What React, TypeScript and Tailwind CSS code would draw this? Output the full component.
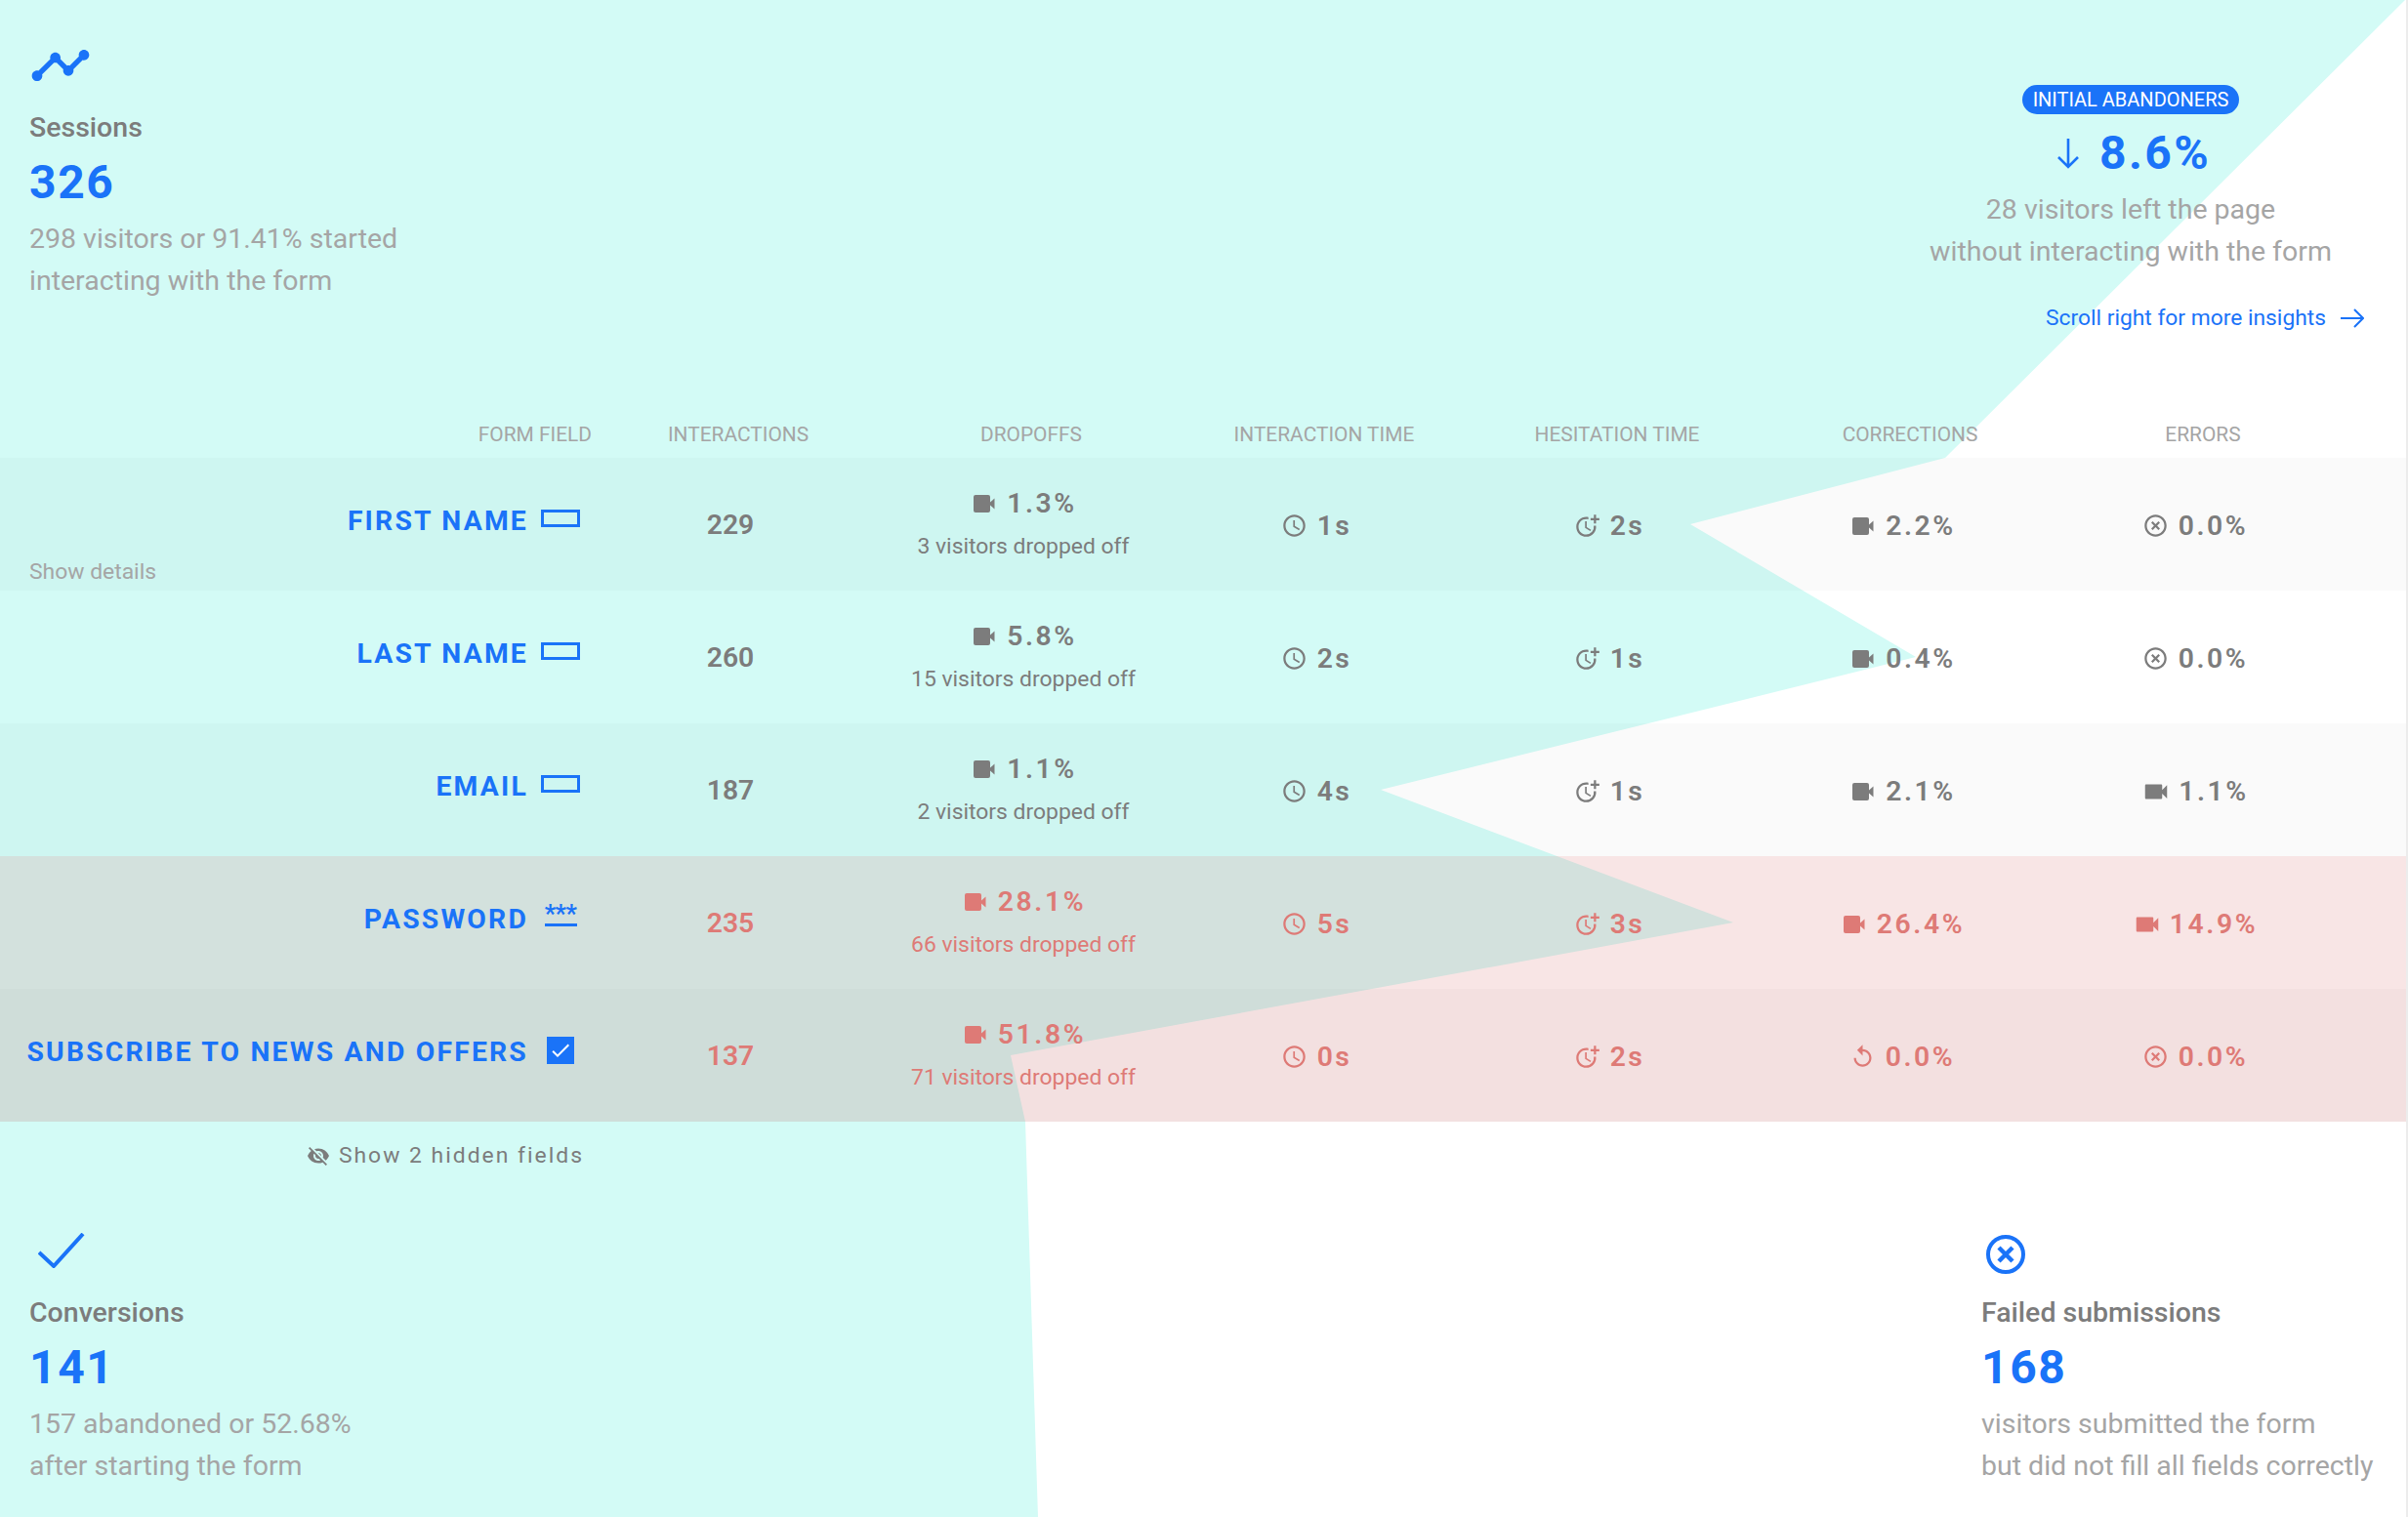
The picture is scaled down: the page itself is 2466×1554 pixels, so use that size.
import React from "react";
import {
  MdAccessTime,
  MdHighlightOff,
  MdCheck,
  MdMoreTime,
  MdReplay,
  MdTimeline,
  MdVideocam,
  MdVisibilityOff,
} from "react-icons/md";

type Tone = "grey" | "red";

type Metric = { icon: "cam" | "off" | "redo" | "camSmall"; value: string };

interface Field {
  name: string;
  kind: "text" | "password" | "check";
  interactions: string;
  drop: string;
  dropText: string;
  time: string;
  hesitation: string;
  corrections: Metric;
  errors: Metric;
  tone: Tone;
  striped: boolean;
}

const fields: Field[] = [
  { name: "FIRST NAME", kind: "text", interactions: "229", drop: "1.3%", dropText: "3 visitors dropped off", time: "1s", hesitation: "2s", corrections: { icon: "cam", value: "2.2%" }, errors: { icon: "off", value: "0.0%" }, tone: "grey", striped: true },
  { name: "LAST NAME", kind: "text", interactions: "260", drop: "5.8%", dropText: "15 visitors dropped off", time: "2s", hesitation: "1s", corrections: { icon: "cam", value: "0.4%" }, errors: { icon: "off", value: "0.0%" }, tone: "grey", striped: false },
  { name: "EMAIL", kind: "text", interactions: "187", drop: "1.1%", dropText: "2 visitors dropped off", time: "4s", hesitation: "1s", corrections: { icon: "cam", value: "2.1%" }, errors: { icon: "camSmall", value: "1.1%" }, tone: "grey", striped: true },
  { name: "PASSWORD", kind: "password", interactions: "235", drop: "28.1%", dropText: "66 visitors dropped off", time: "5s", hesitation: "3s", corrections: { icon: "cam", value: "26.4%" }, errors: { icon: "camSmall", value: "14.9%" }, tone: "red", striped: false },
  { name: "SUBSCRIBE TO NEWS AND OFFERS", kind: "check", interactions: "137", drop: "51.8%", dropText: "71 visitors dropped off", time: "0s", hesitation: "2s", corrections: { icon: "redo", value: "0.0%" }, errors: { icon: "off", value: "0.0%" }, tone: "red", striped: true },
];

const columns = ["INTERACTIONS", "DROPOFFS", "INTERACTION TIME", "HESITATION TIME", "CORRECTIONS", "ERRORS"];

function Funnel() {
  return (
    <svg className="absolute left-0 top-0" width="2466" height="1554" viewBox="0 0 2466 1554">
      <polygon
        fill="#d3fbf6"
        points="0,0 2463,0 1992,469 1731,537 1962,673 1414,809 1775,945 1035,1081 1050,1149 1063,1554 0,1554"
      />
    </svg>
  );
}

function FieldIcon({ kind }: { kind: Field["kind"] }) {
  if (kind === "text") {
    return <div className="w-[40px] h-[18px] border-[3px] border-[#1a73f8] mb-[6px]" />;
  }
  if (kind === "password") {
    return (
      <div className="w-[40px] mb-[6px] flex flex-col items-center text-[#1a73f8]">
        <span className="text-[25px] leading-[13px] font-bold tracking-[-0.5px]">***</span>
        <div className="w-[33px] h-[3px] bg-[#1a73f8] mt-[3px]" />
      </div>
    );
  }
  return (
    <div className="w-[28px] h-[28px] mx-[6px] mb-[6px] bg-[#1a73f8] flex items-center justify-center">
      <MdCheck className="text-white w-[24px] h-[24px]" />
    </div>
  );
}

function CamIcon() {
  return (
    <svg width="26" height="18" viewBox="-4 0 26 18" fill="currentColor">
      <rect x="0" y="0" width="17" height="18" rx="2" />
      <path d="M17 7.5L21.5 3.5v11L17 10.5z" />
    </svg>
  );
}

function MetricValue({ icon, value, tone }: Metric & { tone: Tone }) {
  const color = tone === "red" ? "text-[#de7a76]" : "text-[#7c7c7c]";
  const gap = icon === "cam" ? "gap-[12px]" : icon === "camSmall" ? "gap-[8px]" : "gap-[10px]";
  return (
    <div className={`flex items-center justify-center ${gap} ${color}`}>
      {icon === "cam" && <CamIcon />}
      {icon === "camSmall" && <MdVideocam className="w-[30px] h-[30px]" />}
      {icon === "off" && <MdHighlightOff className="w-[27px] h-[27px]" />}
      {icon === "redo" && <MdReplay className="w-[27px] h-[27px]" />}
      <span className="text-[28.3px] leading-[34px] font-semibold tracking-[2.6px]">{value}</span>
    </div>
  );
}

function Row({ field }: { field: Field }) {
  const red = field.tone === "red";
  const color = red ? "text-[#de7a76]" : "text-[#7c7c7c]";
  return (
    <div className={`relative ${field.striped ? "bg-black/[0.02]" : ""}`}>
      <div className={`grid grid-cols-[606px_repeat(6,300px)] h-[136px] pt-[3px] items-center ${red ? "bg-[#d35c5c29]" : ""}`}>
        <div className="flex items-center justify-end gap-[13px] pr-[12px] pb-[8px]">
          <span className="text-[#1a73f8] text-[28.3px] font-bold tracking-[2.2px] leading-none whitespace-nowrap">{field.name}</span>
          <FieldIcon kind={field.kind} />
        </div>
        <div className={`pr-[16px] text-center text-[28.3px] font-semibold ${color}`}>{field.interactions}</div>
        <div className="pr-[16px] flex flex-col items-center">
          <MetricValue icon="cam" value={field.drop} tone={field.tone} />
          <div className={`text-[22.9px] mt-[10px] ${color}`}>{field.dropText}</div>
        </div>
        <div className={`pr-[16px] flex items-center justify-center gap-[10px] ${color}`}>
          <MdAccessTime className="w-[27px] h-[27px]" />
          <span className="text-[28.3px] leading-[34px] font-semibold tracking-[2.4px]">{field.time}</span>
        </div>
        <div className={`pr-[16px] flex items-center justify-center gap-[10px] ${color}`}>
          <MdMoreTime className="w-[27px] h-[27px]" />
          <span className="text-[28.3px] leading-[34px] font-semibold tracking-[2.4px]">{field.hesitation}</span>
        </div>
        <div className="pr-[16px]">
          <MetricValue {...field.corrections} tone={field.tone} />
        </div>
        <div className="pr-[16px]">
          <MetricValue {...field.errors} tone={field.tone} />
        </div>
      </div>
      {field.name === "FIRST NAME" && (
        <div className="absolute left-[30px] bottom-[2px] text-[22.9px] text-[#a5a5a5]">Show details</div>
      )}
    </div>
  );
}

function Stat({ icon, title, value, lines }: { icon: React.ReactNode; title: string; value: string; lines: string[] }) {
  return (
    <div className="flex flex-col items-start">
      <div className="h-[62px] flex items-center">{icon}</div>
      <div className="text-[28.5px] font-medium text-[#7c7c7c] leading-[38px] mt-[14px]">{title}</div>
      <div className="text-[48px] font-bold text-[#1a73f8] tracking-[1.6px] leading-[56px] mt-[9px]">{value}</div>
      <div className="text-[28.5px] text-[#a5a5a5] leading-[42.5px] mt-[9px] whitespace-nowrap">
        {lines.map((line) => (
          <div key={line}>{line}</div>
        ))}
      </div>
    </div>
  );
}

export default function App() {
  return (
    <div className="relative w-[2466px] h-[1554px] overflow-hidden bg-white font-['Roboto',sans-serif] flex">
      <Funnel />
      <div className="relative flex flex-col h-full w-[2464px]">
        <div className="h-[420px] flex justify-between pl-[30px] pr-[43px] pt-[36px]">
          <Stat
            icon={<MdTimeline className="w-[64px] h-[64px] text-[#1a73f8]" />}
            title="Sessions"
            value="326"
            lines={["298 visitors or 91.41% started", "interacting with the form"]}
          />
          <div className="w-[478px] pt-[51px] flex flex-col items-center">
            <div className="h-[30px] px-[11px] rounded-full bg-[#1a73f8] text-white text-[20px] leading-[30px] whitespace-nowrap">INITIAL ABANDONERS</div>
            <div className="flex items-center gap-[20px] text-[#1a73f8] mt-[10px] ml-[6px] h-[60px]">
              <svg width="24" height="32" viewBox="0 0 24 32" fill="none" stroke="currentColor" strokeWidth="2.6"><path d="M12 1v29M2 20l10 10 10-10" /></svg>
              <span className="text-[48px] font-bold tracking-[2.4px]">8.6%</span>
            </div>
            <div className="text-[28.5px] text-[#a5a5a5] leading-[42.5px] text-center mt-[7px] whitespace-nowrap">
              <div>28 visitors left the page</div>
              <div>without interacting with the form</div>
            </div>
            <div className="self-end flex items-center gap-[15px] text-[#1a73f8] text-[22.8px] mt-[30px]">
              <span>Scroll right for more insights</span>
              <svg width="24" height="20" viewBox="0 0 24 20" fill="none" stroke="currentColor" strokeWidth="2"><path d="M0 10h22M14 1l9 9-9 9" /></svg>
            </div>
          </div>
        </div>
        <div className="grid grid-cols-[606px_repeat(6,300px)] h-[49px] pt-[3px] items-center text-[20.9px] text-[#a5a5a5]">
          <div className="text-right">FORM FIELD</div>
          {columns.map((c) => (
            <div key={c} className="text-center">{c}</div>
          ))}
        </div>
        {fields.map((f) => (
          <Row key={f.name} field={f} />
        ))}
        <div className="h-[70px] flex items-center justify-end w-[598px] gap-[9px] text-[#7c7c7c]">
          <MdVisibilityOff className="w-[24px] h-[24px]" />
          <span className="text-[22.9px] tracking-[2px]">Show 2 hidden fields</span>
        </div>
        <div className="flex justify-between pl-[30px] pr-[31px] pt-[31px]">
          <Stat
            icon={
              <svg className="ml-[9px]" width="48" height="36" viewBox="0 0 48 36" fill="none" stroke="#1a73f8" strokeWidth="4">
                <path d="M1 20l15 14L46 1" />
              </svg>
            }
            title="Conversions"
            value="141"
            lines={["157 abandoned or 52.68%", "after starting the form"]}
          />
          <div className="w-[404px]">
            <Stat
              icon={
                <svg className="ml-[5px] mt-[8px]" width="40" height="40" viewBox="0 0 40 40" fill="none" stroke="#1a73f8">
                  <circle cx="20" cy="20" r="18" strokeWidth="4" />
                  <path d="M13 13l14 14M27 13L13 27" strokeWidth="4.5" />
                </svg>
              }
              title="Failed submissions"
              value="168"
              lines={["visitors submitted the form", "but did not fill all fields correctly"]}
            />
          </div>
        </div>
      </div>
      <div className="relative w-[2px] h-full bg-[#ececec]" />
    </div>
  );
}
